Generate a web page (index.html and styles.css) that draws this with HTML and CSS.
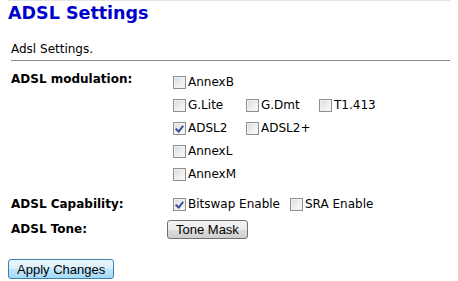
FILE: index.html
```html
<!DOCTYPE html>
<html>
  <head>
    <meta charset="utf-8">
    <title>ADSL Settings</title>
    <link rel="stylesheet" href="styles.css">
  </head>
  <body>
    <h1 class="title">ADSL Settings</h1>
    <div class="content">
      <p class="intro">Adsl Settings.</p>
      <hr class="rule">
      <form class="settings" id="adslForm">
        <div class="row row-top">
          <div class="label">ADSL modulation:</div>
          <div class="options">
            <div class="line">
              <label class="opt"><input type="checkbox" class="box" name="annexB">AnnexB</label>
            </div>
            <div class="line">
              <label class="opt fixed"><input type="checkbox" class="box" name="glite">G.Lite</label>
              <label class="opt fixed"><input type="checkbox" class="box" name="gdmt">G.Dmt</label>
              <label class="opt"><input type="checkbox" class="box" name="t1413">T1.413</label>
            </div>
            <div class="line">
              <label class="opt fixed"><input type="checkbox" class="box" name="adsl2" checked>ADSL2</label>
              <label class="opt"><input type="checkbox" class="box" name="adsl2p">ADSL2+</label>
            </div>
            <div class="line">
              <label class="opt"><input type="checkbox" class="box" name="annexL">AnnexL</label>
            </div>
            <div class="line">
              <label class="opt"><input type="checkbox" class="box" name="annexM">AnnexM</label>
            </div>
          </div>
        </div>
        <div class="row row-cap">
          <div class="label">ADSL Capability:</div>
          <div class="line">
            <label class="opt"><input type="checkbox" class="box" name="bitswap" checked>Bitswap Enable</label>
            <label class="opt opt-sep"><input type="checkbox" class="box" name="sra">SRA Enable</label>
          </div>
        </div>
        <div class="row row-tone">
          <div class="label">ADSL Tone:</div>
          <div class="line">
            <button type="button" class="btn">Tone Mask</button>
          </div>
        </div>
      </form>
    </div>
    <div class="actions">
      <button type="button" class="btn btn-apply">Apply Changes</button>
    </div>
  </body>
</html>
```

FILE: styles.css
```css
body {
  margin: 0 8px;
  border-top: 1px solid #e4e4e4;
  font-family: "DejaVu Sans", Verdana, sans-serif;
  font-size: 12px;
  line-height: 15px;
  color: #000;
  background: #fff;
}
.title {
  margin: 1px 0 0;
  font-size: 17.5px;
  line-height: 22px;
  font-weight: bold;
  color: #0000cc;
}
.content {
  margin-left: 3px;
}
.intro {
  margin: 18px 0 0;
}
.rule {
  margin: 3px 0 0;
  border: none;
  border-top: 1px solid #8a8a8a;
  height: 0;
}
.settings {
  margin-top: 10px;
}
.row {
  display: grid;
  grid-template-columns: 156px 1fr;
  align-items: center;
}
.row-top {
  align-items: start;
}
.row-top .label {
  padding-top: 1px;
}
.row-cap {
  margin-top: 7px;
}
.row-tone {
  margin-top: 1px;
}
.label {
  font-weight: bold;
}
.line {
  display: flex;
  align-items: center;
  height: 23px;
}
.row-tone .line {
  height: 24px;
}
.opt {
  display: flex;
  align-items: center;
}
.opt.fixed {
  width: 73px;
}
.opt-sep {
  margin-left: 4px;
}
.box {
  appearance: none;
  -webkit-appearance: none;
  position: relative;
  width: 13px;
  height: 13px;
  margin: 0 2px 0 6px;
  border: 1px solid #8f8f8f;
  border-radius: 0;
  background: linear-gradient(135deg, #d6d6d6 0%, #ebebeb 45%, #fdfdfd 100%);
  box-shadow: inset 0 0 0 1px #f2f2f2;
}
.box:checked::before {
  content: "";
  position: absolute;
  left: 3px;
  top: 1px;
  width: 3px;
  height: 6px;
  border: solid #3a4f9a;
  border-width: 0 2px 2px 0;
  transform: rotate(40deg);
}
.btn {
  height: 19px;
  margin: 0;
  padding: 0 8px;
  font-family: "Liberation Sans", Arial, sans-serif;
  font-size: 13px;
  line-height: 17px;
  color: #000;
  border: 1px solid #707070;
  border-radius: 3px;
  background: linear-gradient(#f3f3f3 0%, #ebebeb 50%, #dddddd 51%, #cfcfcf 100%);
  cursor: pointer;
}
.actions {
  margin-top: 18px;
}
.btn-apply {
  height: 20px;
  border-color: #3c7fb1;
  background: linear-gradient(#eaf6fd 0%, #d9f0fc 50%, #bee6fd 51%, #a7d9f5 100%);
}
```
